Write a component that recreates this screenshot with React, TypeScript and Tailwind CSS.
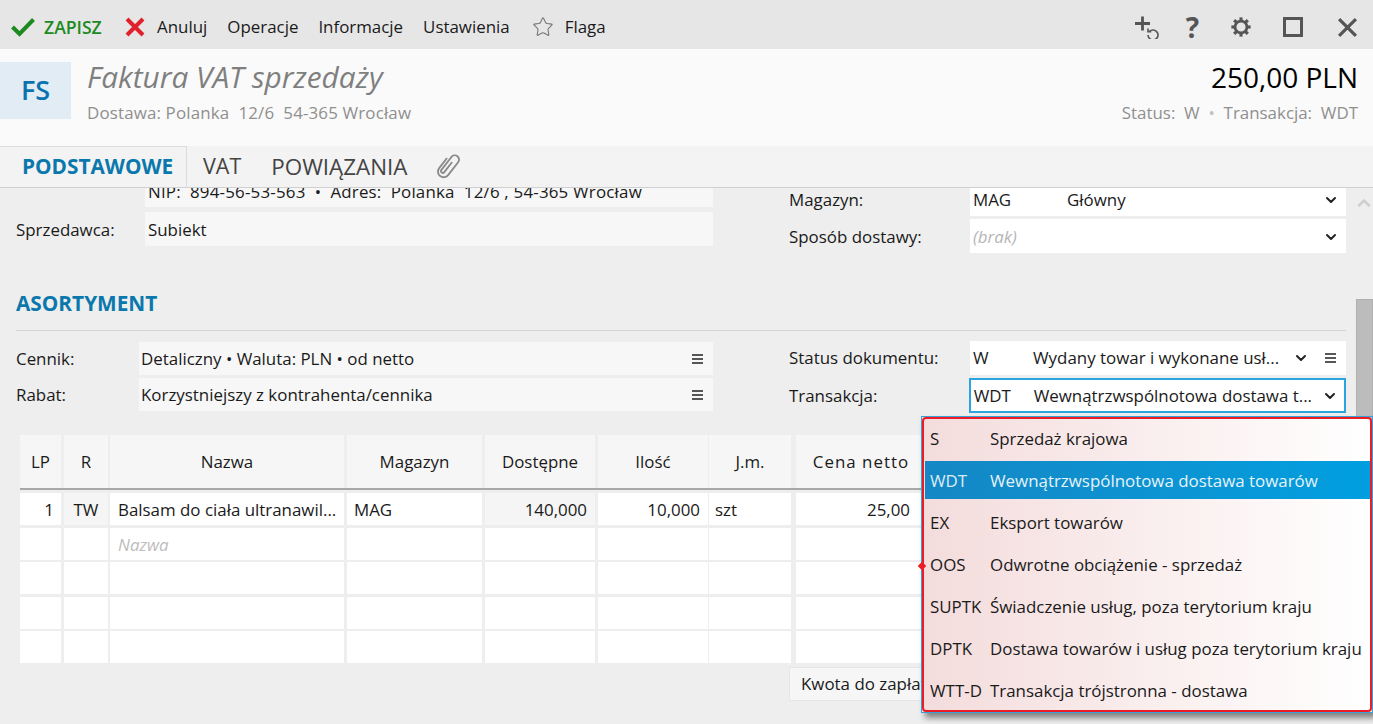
import { ChevronDown, ChevronUp, Star } from "lucide-react";

function MenuLines() {
  return (
    <svg width="11" height="10" viewBox="0 0 11 10" className="shrink-0">
      <path d="M0 1h11M0 5h11M0 9h11" stroke="#222" strokeWidth="1.4" />
    </svg>
  );
}

function AddRefresh() {
  return (
    <svg width="24" height="24" viewBox="0 0 24 24" fill="none" className="shrink-0">
      <path d="M0 8.5h15M7.500 1.500v14" stroke="#555" strokeWidth="2.8" />
      <path d="M13 20a5 5 0 1 0 1.5-3.6" stroke="#555" strokeWidth="1.6" />
      <path d="M13 13.6v3.2h3.2" stroke="#555" strokeWidth="1.6" />
    </svg>
  );
}

function Gear() {
  const teeth = [0, 45, 90, 135, 180, 225, 270, 315];
  return (
    <svg width="22" height="22" viewBox="0 0 24 24" fill="none" className="shrink-0">
      <circle cx="12" cy="12" r="6.5" stroke="#555" strokeWidth="3" />
      {teeth.map((a) => (
        <path key={a} d="M12 5V1.5" stroke="#555" strokeWidth="3.4" transform={`rotate(${a} 12 12)`} />
      ))}
    </svg>
  );
}

function Cross({ size, color, width }: { size: number; color: string; width: number }) {
  return (
    <svg width={size} height={size} viewBox="0 0 20 20" fill="none" className="shrink-0">
      <path d="M2 2l16 16M18 2L2 18" stroke={color} strokeWidth={width} />
    </svg>
  );
}

function Clip() {
  return (
    <svg width="34" height="34" viewBox="0 0 24 24" fill="none" className="shrink-0">
      <path
        d="M8 8v9a4 4 0 0 0 8 0V5.500a3 3 0 0 0-6 0V17a1.300 1.300 0 0 0 2.600 0V8"
        stroke="#8a8a8a"
        strokeWidth="1.3"
        transform="rotate(38 12 12)"
      />
    </svg>
  );
}

function Field({ className, children }: { className?: string; children?: React.ReactNode }) {
  return <div className={`flex items-center overflow-hidden whitespace-nowrap ${className ?? ""}`}>{children}</div>;
}

const HEADERS = ["LP", "R", "Nazwa", "Magazyn", "Dostępne", "Ilość", "J.m.", "Cena netto"];
const COL_SHIFT = ["", "", "-ml-px", "", "", "", "-ml-[2px]", "ml-[2px]"];

const OPTIONS = [
  ["S", "Sprzedaż krajowa"],
  ["WDT", "Wewnątrzwspólnotowa dostawa towarów"],
  ["EX", "Eksport towarów"],
  ["OOS", "Odwrotne obciążenie - sprzedaż"],
  ["SUPTK", "Świadczenie usług, poza terytorium kraju"],
  ["DPTK", "Dostawa towarów i usług poza terytorium kraju"],
  ["WTT-D", "Transakcja trójstronna - dostawa"],
];

function TableGrid() {
  const row1 = [
    { text: "1", cls: "justify-end pr-[7px] bg-white" },
    { text: "TW", cls: "justify-center bg-[#f5f5f5]" },
    { text: "Balsam do ciała ultranawil...", cls: "pl-2 bg-white" },
    { text: "MAG", cls: "pl-[7px] bg-white" },
    { text: "140,000", cls: "justify-end pr-2 bg-[#f5f5f5]" },
    { text: "10,000", cls: "justify-end pr-2 bg-white" },
    { text: "szt", cls: "pl-1.5 bg-white" },
    { text: "25,00", cls: "justify-end pr-4 bg-white" },
  ];
  return (
    <div className="ml-5 mt-[22px] grid w-[930px] grid-cols-[41px_44px_233px_135px_110px_110px_80px_132px] gap-x-[3px] gap-y-[2.5px] text-[#1a1a1a]">
      {HEADERS.map((h, i) => (
        <div key={h} className={`flex h-[53px] items-center justify-center bg-[#f6f6f6] ${COL_SHIFT[i]} ${h === "Cena netto" ? "tracking-[1px]" : ""}`}>
          {h}
        </div>
      ))}
      <div className="col-span-8 -mt-[2.5px] h-[2px] bg-[#a8a8a8]" />
      {row1.map((c, i) => (
        <Field key={i} className={`h-[32px] pt-px ${c.cls} ${COL_SHIFT[i]}`}>
          {c.text}
        </Field>
      ))}
      {HEADERS.map((_, i) => (
        <Field key={i} className={`h-[32px] bg-white pl-2 pt-[2px] italic text-[#bdbdbd] ${COL_SHIFT[i]}`}>
          {i === 2 ? "Nazwa" : ""}
        </Field>
      ))}
      {[0, 1, 2].flatMap((r) => HEADERS.map((_, i) => <div key={`${r}-${i}`} className={`h-[32px] bg-white ${COL_SHIFT[i]}`} />))}
    </div>
  );
}

export default function App() {
  return (
    <div className="relative flex h-[724px] w-[1373px] flex-col overflow-hidden bg-[#eeeeee] font-['Open_Sans',sans-serif] text-[16.9px] text-[#1a1a1a]">
      <div className="flex h-[49px] shrink-0 items-center bg-[#e6e6e6] pl-[11px] pr-[15px] pt-[5px]">
        <svg width="24" height="20" viewBox="0 0 24 20" fill="none" className="shrink-0">
          <path d="M1.5 10l7 7L22.500 2.500" stroke="#1d8a1f" strokeWidth="4" />
        </svg>
        <span className="ml-[9px] w-[59px] whitespace-nowrap text-[17.6px] font-semibold text-[#1d8a1f]">ZAPISZ</span>
        <span className="ml-[22px]"><Cross size={20} color="#e0212b" width={4} /></span>
        <span className="ml-3">Anuluj</span>
        <span className="ml-5">Operacje</span>
        <span className="ml-5">Informacje</span>
        <span className="ml-5">Ustawienia</span>
        <Star size={22} strokeWidth={1.2} className="ml-[22px] text-[#777]" />
        <span className="ml-[11px]">Flaga</span>
        <div className="ml-auto flex items-center text-[#555]">
          <AddRefresh />
          <span className="ml-[27px] text-[28px] font-bold leading-none">?</span>
          <span className="ml-[31px]"><Gear /></span>
          <div className="ml-[31px] h-[20px] w-[20px] border-[3px] border-[#555]" />
          <span className="ml-[34px]"><Cross size={21} color="#555" width={3} /></span>
        </div>
      </div>

      <div className="flex h-[97px] shrink-0 bg-[#fafafa]">
        <div className="mt-[13px] flex h-[57px] w-[71px] items-center justify-center bg-[#e2ecf4] text-[27px] font-semibold text-[#0b72b0]">FS</div>
        <div className="ml-4">
          <div className="mt-[10px] text-[29.8px] italic leading-[36px] text-[#7f7f7f]">Faktura VAT sprzedaży</div>
          <div className="mt-[5px] whitespace-pre tracking-[0.16px] text-[#8f8f8f]">Dostawa: Polanka  12/6  54-365 Wrocław</div>
        </div>
        <div className="ml-auto pr-[15px] text-right">
          <div className="mt-[10px] text-[28px] leading-[36px] text-black">250,00 PLN</div>
          <div className="mt-[5px] whitespace-pre text-[#8f8f8f]">Status:  W  <span className="text-[#c0c0c0]">•</span>  Transakcja:  WDT</div>
        </div>
      </div>

      <div className="flex h-[42px] shrink-0 items-center border-b border-[#d0d0d0] bg-[#f3f3f3] text-[21.5px]">
        <div className="flex h-[42px] w-[187px] items-center border-r border-t border-[#dcdcdc] pl-[22px] text-[20.8px] font-bold text-[#0a78ad]">PODSTAWOWE</div>
        <span className="ml-4 text-[#444]">VAT</span>
        <span className="ml-[30px] text-[22.4px] text-[#444]">POWIĄZANIA</span>
        <span className="ml-[24px] -mt-px"><Clip /></span>
      </div>

      <div className="flex min-h-0 flex-1 overflow-hidden">
        <div className="w-[1355px] shrink-0">
          <div className="-mt-[15px] flex h-[88px] pl-4">
            <div className="w-[697px]">
              <div className="ml-[129px] h-[34px] overflow-hidden whitespace-pre bg-[#f7f7f7] pl-[3px] leading-[38px] tracking-[0.2px]">NIP:  894-56-53-563  •  Adres:  Polanka  12/6 , 54-365 Wrocław</div>
              <div className="mt-[5px] flex items-center">
                <span className="w-[129px] pt-px">Sprzedawca:</span>
                <Field className="h-[34px] flex-1 bg-[#f7f7f7] pl-[3px] pt-px">Subiekt</Field>
              </div>
            </div>
            <div className="ml-[76px] w-[557px]">
              <div className="mt-[9px] flex items-center">
                <span className="w-[181px] pt-px">Magazyn:</span>
                <Field className="h-[34px] w-[376px] bg-white pl-[3px] pr-[7px] pt-px">
                  <span className="w-[94px]">MAG</span>
                  <span>Główny</span>
                  <ChevronDown size={16} strokeWidth={3} className="ml-auto text-[#222]" />
                </Field>
              </div>
              <div className="mt-[3px] flex items-center">
                <span className="w-[181px] pt-px">Sposób dostawy:</span>
                <Field className="h-[34px] w-[376px] bg-white pl-[3px] pr-[7px] pt-px">
                  <span className="italic text-[#b5b5b5]">(brak)</span>
                  <ChevronDown size={16} strokeWidth={3} className="ml-auto text-[#222]" />
                </Field>
              </div>
            </div>
          </div>

          <div className="ml-4 mr-[9px] mt-[29px] border-b border-[#d4d4d4] pb-[14px] text-[20.800px] font-bold leading-[26px] text-[#0a78ad]">ASORTYMENT</div>

          <div className="mt-[10px] flex pl-4">
            <div className="w-[697px] pt-px">
              <div className="flex items-center">
                <span className="w-[123px]">Cennik:</span>
                <Field className="h-[33px] flex-1 bg-[#f7f7f7] pl-[2px] pr-[10px]">
                  Detaliczny • Waluta: PLN • od netto
                  <span className="ml-auto"><MenuLines /></span>
                </Field>
              </div>
              <div className="mt-[3px] flex items-center">
                <span className="w-[123px]">Rabat:</span>
                <Field className="h-[33px] flex-1 bg-[#f7f7f7] pl-[2px] pr-[10px]">
                  Korzystniejszy z kontrahenta/cennika
                  <span className="ml-auto"><MenuLines /></span>
                </Field>
              </div>
            </div>
            <div className="ml-[76px] w-[557px]">
              <div className="flex items-center">
                <span className="w-[181px]">Status dokumentu:</span>
                <Field className="h-[34px] w-[376px] bg-white pl-[3px] pr-[10px]">
                  <span className="w-[60px]">W</span>
                  <span className="w-[260px] overflow-hidden">Wydany towar i wykonane usł...</span>
                  <ChevronDown size={16} strokeWidth={3} className="text-[#222]" />
                  <span className="ml-auto"><MenuLines /></span>
                </Field>
              </div>
              <div className="mt-[3px] flex items-center">
                <span className="w-[180px]">Transakcja:</span>
                <Field className="h-[35px] w-[378px] border-2 border-[#2aa5e0] bg-white pl-[3px] pr-[6px]">
                  <span className="w-[60px]">WDT</span>
                  <span className="w-[285px] overflow-hidden">Wewnątrzwspólnotowa dostawa t...</span>
                  <ChevronDown size={16} strokeWidth={3} className="ml-auto text-[#222]" />
                </Field>
              </div>
            </div>
          </div>

          <TableGrid />

          <div className="ml-[789px] mt-[4px] flex h-[34px] w-[300px] items-center whitespace-nowrap border border-[#e6e6e6] bg-[#f6f6f6] pl-[11px]">Kwota do zapłaty</div>
        </div>

        <div className="flex w-[18px] shrink-0 flex-col items-center">
          <ChevronUp size={20} strokeWidth={3} className="mt-[5px] text-[#cfcfcf]" />
          <div className="ml-[1px] mt-[86px] h-[300px] w-[17px] border border-[#b0b0b0] bg-[#bcbcbc]" />
        </div>
      </div>

      {/* open list of the Transakcja select */}
      <div className="absolute left-[921px] top-[416px] h-[297px] w-[452px] border border-[#3aa0d8] shadow-[4px_5px_6px_rgba(0,0,0,0.45)]">
        <div className="relative h-full overflow-hidden rounded-[4px] border-2 border-[#ed1c24] bg-gradient-to-r from-[#f4dcdc] to-white pl-[6px]">
          <div className="-mt-px">
            {OPTIONS.map(([code, label]) => {
              const selected = code === "WDT";
              return (
                <div key={code} className="flex h-[42px] items-center whitespace-nowrap">
                  <span className={`w-[60px] ${selected ? "z-10 text-[#dcecf6]" : ""}`}>{code}</span>
                  <span className={selected ? "z-10 text-[#e6f2f9]" : ""}>{label}</span>
                  {selected && <div className="absolute left-[1px] right-0 top-[42px] h-[38px] bg-gradient-to-r from-[#1487c4] to-[#009fe0]" />}
                </div>
              );
            })}
          </div>
        </div>
        <div className="absolute -left-[3px] top-[146px] h-[6px] w-[6px] rotate-45 bg-[#ed1c24]" />
      </div>
    </div>
  );
}
